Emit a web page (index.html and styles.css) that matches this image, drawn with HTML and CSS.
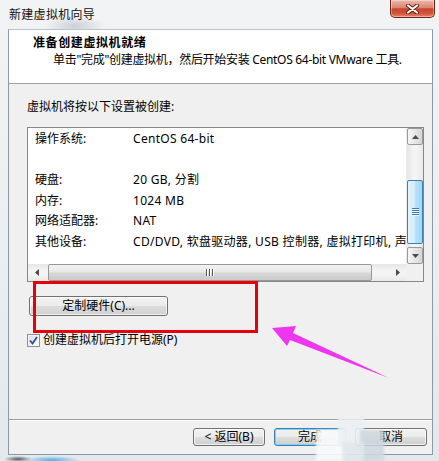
FILE: index.html
```html
<!DOCTYPE html>
<html lang="zh-CN">
<head>
<meta charset="utf-8">
<title>新建虚拟机向导</title>
<link rel="stylesheet" href="styles.css">
</head>
<body>
<div class="window">
  <div class="titlebar">
    <span class="title">新建虚拟机向导</span>
    <button class="close" aria-label="关闭">
      <svg width="13" height="10" viewBox="0 0 13 10">
        <path d="M2 1.5 L11 8.5 M11 1.5 L2 8.5" stroke="#5e1c12" stroke-width="4" stroke-linecap="round"/>
        <path d="M2 1.5 L11 8.5 M11 1.5 L2 8.5" stroke="#ffffff" stroke-width="2.2" stroke-linecap="round"/>
      </svg>
    </button>
  </div>
  <div class="frame">
    <div class="client">
      <div class="header">
        <div class="h-title">准备创建虚拟机就绪</div>
        <div class="h-sub">单击"完成"创建虚拟机，然后开始安装 CentOS 64-bit VMware 工具.</div>
      </div>
      <div class="body">
        <div class="intro">虚拟机将按以下设置被创建:</div>
        <div class="listbox">
          <div class="list-view">
            <div class="row"><span class="k">操作系统:</span><span class="v">CentOS 64-bit</span></div>
            <div class="row"></div>
            <div class="row"><span class="k">硬盘:</span><span class="v">20 GB, 分割</span></div>
            <div class="row"><span class="k">内存:</span><span class="v">1024 MB</span></div>
            <div class="row"><span class="k">网络适配器:</span><span class="v">NAT</span></div>
            <div class="row"><span class="k">其他设备:</span><span class="v">CD/DVD, 软盘驱动器, USB 控制器, 虚拟打印机, 声</span></div>
          </div>
          <div class="vscroll">
            <div class="sb-btn">
              <svg width="7" height="4" viewBox="0 0 7 4"><polygon points="0,4 3.5,0 7,4" fill="#4a4a4a"/></svg>
            </div>
            <div class="v-track">
              <div class="v-thumb">
                <svg width="7" height="8" viewBox="0 0 7 8">
                  <path d="M0 0.5H7M0 2.5H7M0 4.5H7M0 6.5H7" stroke="#3f79a8" stroke-width="1"/>
                  <path d="M0 1.5H7M0 3.5H7M0 5.5H7M0 7.5H7" stroke="#eaf6fd" stroke-width="1"/>
                </svg>
              </div>
            </div>
            <div class="sb-btn">
              <svg width="7" height="4" viewBox="0 0 7 4"><polygon points="0,0 7,0 3.5,4" fill="#4a4a4a"/></svg>
            </div>
          </div>
          <div class="hscroll">
            <div class="h-arrow">
              <svg width="4" height="7" viewBox="0 0 4 7"><polygon points="4,0 4,7 0,3.5" fill="#4a4a4a"/></svg>
            </div>
            <div class="h-track">
              <div class="h-thumb">
                <svg width="8" height="7" viewBox="0 0 8 7">
                  <path d="M0.5 0V7M3.5 0V7M6.5 0V7" stroke="#5c5c5c" stroke-width="1"/>
                  <path d="M1.5 0V7M4.5 0V7M7.5 0V7" stroke="#ffffff" stroke-width="1"/>
                </svg>
              </div>
            </div>
            <div class="h-arrow">
              <svg width="4" height="7" viewBox="0 0 4 7"><polygon points="0,0 0,7 4,3.5" fill="#4a4a4a"/></svg>
            </div>
          </div>
          <div class="corner"></div>
        </div>
        <button class="btn custom">定制硬件(C)...</button>
        <label class="check">
          <span class="box">
            <svg width="9" height="9" viewBox="0 0 9 9"><path d="M1 4.5 L3.5 7.5 L8 1" fill="none" stroke="#2a4f9a" stroke-width="1.8"/></svg>
          </span>
          <span>创建虚拟机后打开电源(P)</span>
        </label>
      </div>
      <div class="footer">
        <button class="btn nav">&lt; 返回(B)</button>
        <button class="btn nav default">完成</button>
        <button class="btn nav">取消</button>
      </div>
    </div>
  </div>

  <!-- annotation drawn over the dialog -->
  <div class="callout"></div>
  <svg class="pointer" width="439" height="461" viewBox="0 0 439 461">
    <polygon points="272,328 296,326 293,333 389,378 290,340 287,346" fill="#ef36ef"/>
  </svg>
  <div class="watermark">
    <span class="wm a"></span><span class="wm b"></span><span class="wm c"></span><span class="wm d"></span>
  </div>
</div>
</body>
</html>
```

FILE: styles.css
```css
* { box-sizing: border-box; }

html, body {
  margin: 0;
  padding: 0;
}

body {
  width: 439px;
  height: 461px;
  overflow: hidden;
  font-family: "Noto Sans", "Noto Sans CJK SC", sans-serif;
  font-size: 12px;
  color: #000;
}

.window {
  position: relative;
  width: 439px;
  height: 461px;
  display: flex;
  flex-direction: column;
  background:
    radial-gradient(ellipse 28px 4px at 52px 460px, #55aee6, rgba(85,174,230,0)),
    radial-gradient(ellipse 14px 3px at 18px 459px, #555b61, rgba(85,91,97,0)),
    radial-gradient(ellipse 30px 10px at 75px 26px, #c9d0d6, rgba(201,208,214,0)),
    linear-gradient(180deg, #f1f3f4 0%, #eceff1 50%, #e3e8ec 100%);
}

/* ---------- title bar ---------- */
.titlebar {
  flex: none;
  height: 29px;
  display: flex;
  align-items: flex-start;
}

.title {
  padding-left: 9px;
  line-height: 29px;
  letter-spacing: 0.3px;
  color: #111;
}

.close {
  margin-left: auto;
  margin-right: 4px;
  width: 45px;
  height: 18px;
  padding: 0;
  border: 1px solid #6e2419;
  border-top: none;
  border-radius: 0 0 5px 5px;
  background: linear-gradient(180deg, #ecb9ae 0%, #dc8472 45%, #c9442c 52%, #d2563d 80%, #e4886f 100%);
  box-shadow: inset 0 0 0 1px rgba(255,255,255,0.35);
  display: flex;
  align-items: center;
  justify-content: center;
}

/* ---------- dialog client area ---------- */
.frame {
  flex: none;
  height: 426px;
  padding-left: 8px;
}

.client {
  width: 425px;
  height: 426px;
  background: #f0f0f0;
  border: 1px solid #8d99a5;
  border-top-color: #b7c2cc;
  display: flex;
  flex-direction: column;
}

.header {
  flex: none;
  height: 54px;
  background: #fff;
  border-bottom: 1px solid #a0a0a0;
  padding-top: 5px;
}

.h-title {
  padding-left: 24px;
  line-height: 16px;
  font-weight: bold;
  letter-spacing: 0.6px;
}

.h-sub {
  margin-top: 1px;
  padding-left: 44px;
  line-height: 16px;
  letter-spacing: -0.3px;
}

.body {
  padding: 15px 8px 0 18px;
  display: flex;
  flex-direction: column;
  align-items: flex-start;
}

.intro {
  line-height: 16px;
}

/* ---------- summary list ---------- */
.listbox {
  margin-top: 12px;
  width: 397px;
  height: 155px;
  border: 1px solid #828790;
  background: #fff;
  display: grid;
  grid-template-columns: 1fr 17px;
  grid-template-rows: 1fr 17px;
}

.list-view {
  overflow: hidden;
  padding: 1px 0 0 7px;
}

.row {
  height: 20.5px;
  line-height: 20.5px;
  display: flex;
  white-space: nowrap;
}

.k {
  flex: none;
  width: 98px;
}

.v {
  flex: none;
  letter-spacing: 0.3px;
}

.vscroll {
  display: flex;
  flex-direction: column;
  background: linear-gradient(90deg, #e6e6e6, #f4f4f4 40%, #f4f4f4 60%, #e9e9e9);
  border-left: 1px solid #ececec;
}

.sb-btn {
  flex: none;
  height: 17px;
  border: 1px solid #9a9a9a;
  border-radius: 2px;
  background: linear-gradient(90deg, #f6f6f6, #e4e4e4 55%, #d6d6d6);
  display: flex;
  align-items: center;
  justify-content: center;
}

.v-track {
  flex: 1;
}

.v-thumb {
  margin-top: 35px;
  height: 64px;
  border: 1px solid #3c7fb1;
  border-radius: 2px;
  background: linear-gradient(90deg, #e3f4fc 0%, #d2edfb 45%, #b6e0f8 55%, #a6d7f4 100%);
  display: flex;
  align-items: center;
  justify-content: center;
}

.hscroll {
  display: flex;
  background: linear-gradient(180deg, #e6e6e6, #f4f4f4 40%, #f4f4f4 60%, #e9e9e9);
}

.h-arrow {
  flex: none;
  width: 17px;
  display: flex;
  align-items: center;
  justify-content: center;
}

.h-track {
  flex: 1;
  display: flex;
  align-items: stretch;
}

.h-thumb {
  margin-left: 3px;
  width: 324px;
  border: 1px solid #979797;
  border-radius: 2px;
  background: linear-gradient(180deg, #f3f3f3 0%, #e8e8e8 45%, #d6d6d6 55%, #cbcbcb 100%);
  display: flex;
  align-items: center;
  justify-content: center;
}

.corner {
  background: #f0f0f0;
}

/* ---------- buttons ---------- */
.btn {
  font: inherit;
  color: #000;
  padding: 0;
  border: 1px solid #707070;
  border-radius: 3px;
  background: linear-gradient(180deg, #f2f2f2 0%, #ebebeb 48%, #dddddd 52%, #cfcfcf 100%);
  box-shadow: inset 0 0 0 1px rgba(255,255,255,0.7);
}

.custom {
  margin-top: 14px;
  margin-left: 2px;
  width: 139px;
  height: 20px;
  line-height: 18px;
}

.check {
  margin-top: 16px;
  display: flex;
  align-items: center;
  gap: 3px;
  line-height: 16px;
}

.box {
  width: 13px;
  height: 13px;
  border: 1px solid #8f8f8f;
  background: linear-gradient(135deg, #dcdcdc, #ffffff);
  box-shadow: inset 0 0 0 1px #f4f4f4;
  display: flex;
  align-items: center;
  justify-content: center;
}

.footer {
  margin-top: auto;
  height: 35px;
  border-top: 1px solid #a0a0a0;
  box-shadow: inset 0 1px 0 #ffffff;
  padding: 8px 5px 0 0;
  display: flex;
  justify-content: flex-end;
  align-items: flex-start;
  gap: 9px;
}

.nav {
  width: 72px;
  height: 18px;
  line-height: 16px;
}

.default {
  border-color: #3c7fb1;
  box-shadow: inset 0 0 0 1px #7fd0f5;
}

/* ---------- annotation ---------- */
.callout {
  position: absolute;
  left: 33px;
  top: 281px;
  width: 225px;
  height: 52px;
  border: 3px solid #e6000c;
}

.pointer {
  position: absolute;
  left: 0;
  top: 0;
}

.watermark {
  position: absolute;
  left: 312px;
  top: 412px;
  width: 80px;
  height: 49px;
  filter: blur(1px);
}

.wm {
  position: absolute;
  display: block;
}

.wm.a { left: 4px; top: 18px; width: 30px; height: 31px; background: rgba(246,248,250,0.92); }
.wm.b { left: 26px; top: 6px; width: 26px; height: 26px; background: rgba(236,240,243,0.9); }
.wm.c { left: 48px; top: 18px; width: 24px; height: 31px; background: rgba(206,215,223,0.85); }
.wm.d { left: 30px; top: 30px; width: 22px; height: 19px; background: rgba(224,231,236,0.9); }
```
